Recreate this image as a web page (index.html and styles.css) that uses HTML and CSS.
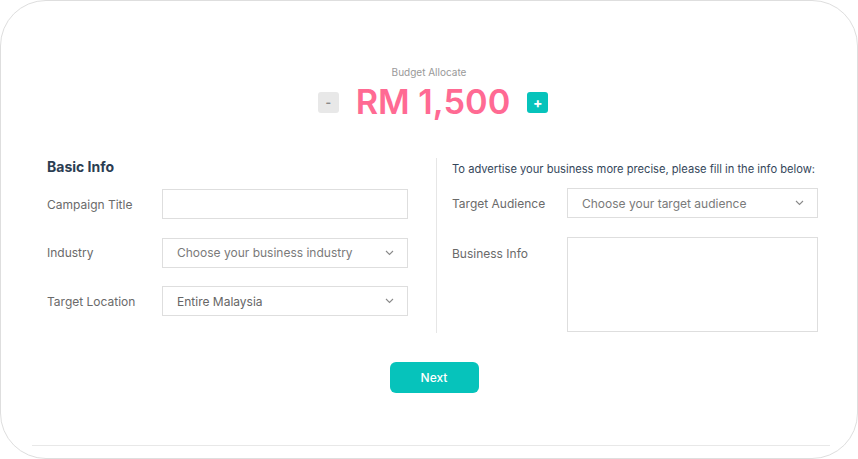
FILE: index.html
```html
<!DOCTYPE html>
<html>
<head>
<meta charset="utf-8">
<link rel="stylesheet" href="styles.css">
</head>
<body>
<div class="frame">
  <div class="budget">
    <div class="budget-label">Budget Allocate</div>
    <div class="amount-row">
      <button class="step minus">-</button>
      <div class="amount">RM 1,500</div>
      <button class="step plus">+</button>
    </div>
  </div>

  <div class="form">
    <div class="col left">
      <h2 class="heading">Basic Info</h2>
      <div class="rows">
        <div class="row">
          <label class="label">Campaign Title</label>
          <div class="field"></div>
        </div>
        <div class="row">
          <label class="label">Industry</label>
          <div class="field select"><span class="ph">Choose your business industry</span><svg class="chev" width="9" height="6" viewBox="0 0 9 6"><polyline points="1,1 4.5,4.5 8,1" fill="none" stroke="#8a8a8a" stroke-width="1.1"/></svg></div>
        </div>
        <div class="row">
          <label class="label">Target Location</label>
          <div class="field select"><span class="val">Entire Malaysia</span><svg class="chev" width="9" height="6" viewBox="0 0 9 6"><polyline points="1,1 4.5,4.5 8,1" fill="none" stroke="#8a8a8a" stroke-width="1.1"/></svg></div>
        </div>
      </div>
    </div>
    <div class="col right">
      <p class="note">To advertise your business more precise, please fill in the info below:</p>
      <div class="rows r2">
        <div class="row">
          <label class="label">Target Audience</label>
          <div class="field select"><span class="ph">Choose your target audience</span><svg class="chev" width="9" height="6" viewBox="0 0 9 6"><polyline points="1,1 4.5,4.5 8,1" fill="none" stroke="#8a8a8a" stroke-width="1.1"/></svg></div>
        </div>
        <div class="row top">
          <label class="label">Business Info</label>
          <div class="field area"></div>
        </div>
      </div>
    </div>
  </div>

  <div class="actions">
    <button class="next">Next</button>
  </div>
  <div class="rule"></div>
</div>
</body>
</html>
```

FILE: styles.css
```css
* { box-sizing: border-box; }
html, body { margin: 0; padding: 0; background: #fff; }
body { font-family: Inter, "Noto Sans", sans-serif; }

.frame {
  width: 858px;
  height: 459px;
  border: 1px solid #dedede;
  border-radius: 46px;
  display: flex;
  flex-direction: column;
  overflow: hidden;
}

.budget { text-align: center; padding-top: 65px; }
.budget-label { font-size: 10px; line-height: 13px; color: #999; }
.amount-row {
  display: flex;
  justify-content: center;
  align-items: center;
  gap: 17px;
  margin-top: 3px;
  height: 40px;
  padding-left: 8px;
}
.step {
  width: 21px;
  height: 21px;
  border: none;
  border-radius: 3px;
  padding: 0;
  font-family: inherit;
  font-size: 12px;
  font-weight: 700;
  line-height: 21px;
}
.minus { background: #e8e8e8; color: #8a8a8a; }
.plus { background: #06c3bb; color: #fff; font-size: 14px; }
.amount {
  font-size: 34.3px;
  font-weight: 600;
  color: #ff6a93;
  line-height: 40px;
}

.form {
  display: flex;
  margin-top: 36px;
  padding-left: 46px;
}
.col.left { width: 361px; margin-right: 28px; }
.col.right {
  width: 382px;
  border-left: 1px solid #e6e6e6;
  padding-left: 15px;
  height: 175px;
}
.heading {
  margin: 0;
  font-size: 14px;
  font-weight: 700;
  line-height: 18px;
  color: #2b3d52;
}
.note {
  margin: 5px 0 0;
  font-size: 11.15px;
  line-height: 13px;
  color: #34465a;
}
.rows { display: flex; flex-direction: column; gap: 18.5px; margin-top: 13px; }
.r2 { margin-top: 12px; }
.row { display: flex; align-items: center; }
.row.top { align-items: flex-start; }
.label {
  width: 115px;
  flex: none;
  font-size: 12px;
  color: #6a6a6a;
}
.row.top .label { margin-top: 9px; }
.field {
  flex: 1;
  height: 30px;
  border: 1px solid #dedede;
  display: flex;
  align-items: center;
  padding: 0 14px;
  font-size: 12px;
}
.field.area { height: 95px; }
.select { justify-content: space-between; }
.ph { color: #7a7a7a; }
.val { color: #666; }
.chev { margin-right: -1px; }

.actions { display: flex; justify-content: center; margin-top: 29px; padding-left: 10px; }
.next {
  width: 89px;
  height: 31px;
  border: none;
  border-radius: 6px;
  background: #06c3bb;
  color: #fff;
  font-family: inherit;
  font-size: 12px;
  font-weight: 500;
}
.rule {
  margin: 52px 27px 0 31px;
  height: 1px;
  background: #e8e8e8;
}
```
